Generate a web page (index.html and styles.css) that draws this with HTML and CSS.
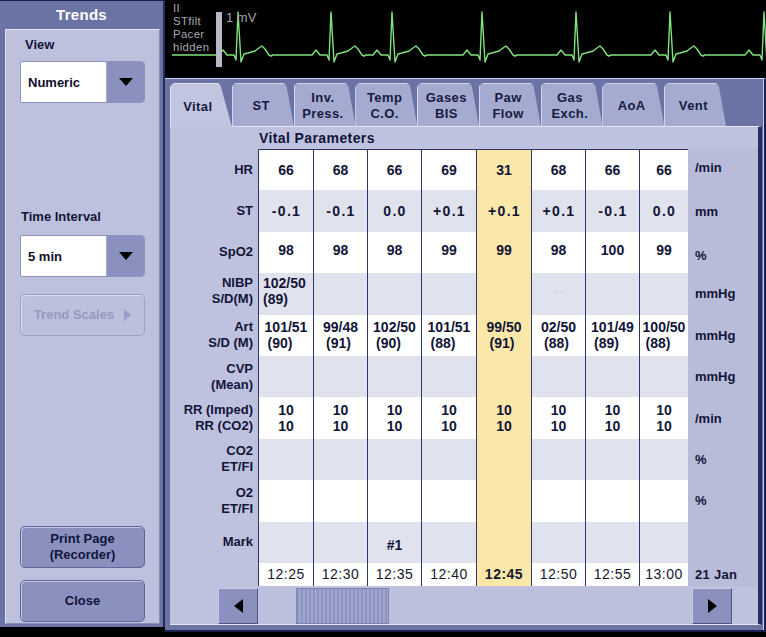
FILE: index.html
```html
<!DOCTYPE html>
<html>
<head>
<meta charset="utf-8">
<title>Trends</title>
<link rel="stylesheet" href="styles.css">
</head>
<body>
<div class="screen">
  <aside class="side">
    <div class="side-title">Trends</div>
    <div class="side-inner">
      <div class="lbl lbl-view">View</div>
      <div class="dropdown"><span class="dd-text">Numeric</span><span class="dd-btn"><span class="tri-down"></span></span></div>
      <div class="lbl lbl-time">Time Interval</div>
      <div class="dropdown dd-time"><span class="dd-text">5 min</span><span class="dd-btn"><span class="tri-down"></span></span></div>
      <div class="btn btn-disabled">Trend Scales<span class="tri-right"></span></div>
      <div class="spacer"></div>
      <div class="btn">Print Page<br>(Recorder)</div>
      <div class="btn btn-close">Close</div>
    </div>
  </aside>

  <main class="main">
    <div class="ecg">
      <svg class="ecg-svg" width="601" height="78" viewBox="165 0 601 78">
        <polyline fill="none" stroke="#7fe27f" stroke-width="1.4" stroke-linejoin="round" points="172,55 219,55 223,50 227,55 234,55 236,60 238,12 241,62 244,54 248,53 255,51 259,48 262,46 265,49 269,55 271,56 273,55 312,55 316,50 320,55 327,55 329,60 331,12 334,62 337,54 341,53 348,51 352,48 355,46 358,49 362,55 364,56 366,55 373,55 377,50 381,55 388,55 390,60 392,12 395,62 398,54 402,53 409,51 413,48 416,46 419,49 423,55 425,56 427,55 463,55 467,50 471,55 478,55 480,60 482,12 485,62 488,54 492,53 499,51 503,48 506,46 509,49 513,55 515,56 517,55 557,55 561,50 565,55 572,55 574,60 576,12 579,62 582,54 586,53 593,51 597,48 600,46 603,49 607,55 609,56 611,55 651,55 655,50 659,55 666,55 668,60 670,12 673,62 676,54 680,53 687,51 691,48 694,46 697,49 701,55 703,56 705,55 745,55 749,50 753,55 760,55 762,60 764,12 767,62"/>
        <rect x="216" y="12" width="6" height="55" fill="#b8b8c8"/>
      </svg>
      <div class="ecg-labels">
        <div class="ecg-line">II</div>
        <div class="ecg-line">STfilt</div>
        <div class="ecg-line">Pacer</div>
        <div class="ecg-line">hidden</div>
      </div>
      <div class="ecg-scale">1 mV</div>
    </div>

    <div class="panel">
      <div class="tabs">
        <div class="tab active">Vital</div>
        <div class="tab">ST</div>
        <div class="tab">Inv.<br>Press.</div>
        <div class="tab">Temp<br>C.O.</div>
        <div class="tab">Gases<br>BIS</div>
        <div class="tab">Paw<br>Flow</div>
        <div class="tab">Gas<br>Exch.</div>
        <div class="tab">AoA</div>
        <div class="tab">Vent</div>
      </div>

      <div class="content">
        <div class="content-title">Vital Parameters</div>

        <div class="table">
          <div class="row w first">
            <div class="lab">HR</div>
            <div class="c">66</div><div class="c">68</div><div class="c">66</div><div class="c">69</div>
            <div class="c hl">31</div><div class="c">68</div><div class="c">66</div><div class="c">66</div>
            <div class="u up">/min</div>
          </div>
          <div class="row g">
            <div class="lab">ST</div>
            <div class="c dec">-0.1</div><div class="c dec">-0.1</div><div class="c dec">0.0</div><div class="c dec">+0.1</div>
            <div class="c hl dec">+0.1</div><div class="c dec">+0.1</div><div class="c dec">-0.1</div><div class="c dec">0.0</div>
            <div class="u">mm</div>
          </div>
          <div class="row w">
            <div class="lab">SpO2</div>
            <div class="c up">98</div><div class="c up">98</div><div class="c up">98</div><div class="c up">99</div>
            <div class="c hl up">99</div><div class="c up">98</div><div class="c up">100</div><div class="c up">99</div>
            <div class="u down">%</div>
          </div>
          <div class="row g">
            <div class="lab up">NIBP<br>S/D(M)</div>
            <div class="c left up">102/50<br>(89)</div><div class="c"></div><div class="c"></div><div class="c"></div>
            <div class="c hl"></div><div class="c faint up">- -</div><div class="c"></div><div class="c"></div>
            <div class="u">mmHg</div>
          </div>
          <div class="row w">
            <div class="lab">Art<br>S/D (M)</div>
            <div class="c"><span class="pair">101/51<br><i>(90)</i></span></div>
            <div class="c"><span class="pair">99/48<br><i>(91)</i></span></div>
            <div class="c"><span class="pair">102/50<br><i>(90)</i></span></div>
            <div class="c"><span class="pair">101/51<br><i>(88)</i></span></div>
            <div class="c hl"><span class="pair">99/50<br><i>(91)</i></span></div>
            <div class="c"><span class="pair">02/50<br><i>(88)</i></span></div>
            <div class="c"><span class="pair">101/49<br><i>(89)</i></span></div>
            <div class="c"><span class="pair">100/50<br><i>(88)</i></span></div>
            <div class="u">mmHg</div>
          </div>
          <div class="row g">
            <div class="lab">CVP<br>(Mean)</div>
            <div class="c"></div><div class="c"></div><div class="c"></div><div class="c"></div>
            <div class="c hl"></div><div class="c"></div><div class="c"></div><div class="c"></div>
            <div class="u">mmHg</div>
          </div>
          <div class="row w">
            <div class="lab">RR (Imped)<br>RR (CO2)</div>
            <div class="c">10<br>10</div><div class="c">10<br>10</div><div class="c">10<br>10</div><div class="c">10<br>10</div>
            <div class="c hl">10<br>10</div><div class="c">10<br>10</div><div class="c">10<br>10</div><div class="c">10<br>10</div>
            <div class="u">/min</div>
          </div>
          <div class="row g">
            <div class="lab">CO2<br>ET/FI</div>
            <div class="c"></div><div class="c"></div><div class="c"></div><div class="c"></div>
            <div class="c hl"></div><div class="c"></div><div class="c"></div><div class="c"></div>
            <div class="u">%</div>
          </div>
          <div class="row w">
            <div class="lab">O2<br>ET/FI</div>
            <div class="c"></div><div class="c"></div><div class="c"></div><div class="c"></div>
            <div class="c hl"></div><div class="c"></div><div class="c"></div><div class="c"></div>
            <div class="u">%</div>
          </div>
          <div class="row g">
            <div class="lab">Mark</div>
            <div class="c"></div><div class="c"></div><div class="c down">#1</div><div class="c"></div>
            <div class="c hl"></div><div class="c"></div><div class="c"></div><div class="c"></div>
            <div class="u"></div>
          </div>
          <div class="row w time">
            <div class="lab"></div>
            <div class="c">12:25</div><div class="c">12:30</div><div class="c">12:35</div><div class="c">12:40</div>
            <div class="c hl">12:45</div><div class="c">12:50</div><div class="c">12:55</div><div class="c">13:00</div>
            <div class="u">21 Jan</div>
          </div>
        </div>

        <div class="scroll">
          <div class="sb-btn"><span class="tri-left"></span></div>
          <div class="sb-track"><div class="sb-thumb"></div></div>
          <div class="sb-btn"><span class="tri-rt"></span></div>
        </div>
      </div>
    </div>
  </main>
</div>
</body>
</html>
```

FILE: styles.css
```css
* { box-sizing: border-box; }

html, body {
  margin: 0;
  padding: 0;
}

body {
  background: #000;
  width: 766px;
  height: 637px;
  overflow: hidden;
  font-family: "Liberation Sans", Arial, sans-serif;
  color: #121438;
}

.screen {
  display: flex;
  align-items: flex-start;
  width: 766px;
  height: 637px;
}

/* ---------- left panel ---------- */
.side {
  width: 165px;
  height: 627px;
  flex: none;
  background: #6b73a5;
  border-top: 1px solid #1c2050;
  border-right: 2px solid #262b5e;
  display: flex;
  flex-direction: column;
}

.side-title {
  height: 28px;
  line-height: 28px;
  text-align: center;
  color: #fff;
  font-weight: bold;
  font-size: 15px;
  letter-spacing: 0.3px;
}

.side-inner {
  flex: 1;
  margin: 0 3px 3px 5px;
  background: #bdc1dd;
  border: 1px solid;
  border-color: #dfe2f1 #878eba #878eba #dfe2f1;
  padding: 0 14px 1px;
  display: flex;
  flex-direction: column;
}

.lbl {
  font-weight: bold;
  font-size: 13px;
  line-height: 16px;
  color: #121438;
}

.lbl-view { margin-top: 7px; padding-left: 5px; }
.lbl-time { margin-top: 106px; padding-left: 1px; }

.dropdown {
  display: flex;
  height: 42px;
  margin-top: 8px;
  border: 1px solid #8c93bf;
  border-radius: 2px 4px 4px 2px;
  overflow: hidden;
}
.dd-time { margin-top: 10px; }

.dd-text {
  flex: 1;
  background: #fff;
  display: flex;
  align-items: center;
  padding-left: 7px;
  font-weight: bold;
  font-size: 13px;
  color: #0e0f2c;
}

.dd-btn {
  width: 38px;
  background: #8a91bf;
  border-left: 1px solid #a8addb;
  display: flex;
  align-items: center;
  justify-content: center;
}

.tri-down {
  width: 0;
  height: 0;
  border-left: 7.5px solid transparent;
  border-right: 7.5px solid transparent;
  border-top: 8px solid #000;
}

.btn {
  height: 42px;
  border-radius: 5px;
  background: #8a91bf;
  border: 1px solid #5f6699;
  box-shadow: inset 1px 1px 0 #c3c7e3;
  display: flex;
  align-items: center;
  justify-content: center;
  text-align: center;
  font-weight: bold;
  font-size: 13px;
  line-height: 16px;
  color: #12143a;
}

.btn-disabled {
  margin-top: 17px;
  background: #bcc0dc;
  border-color: #9aa0c8;
  box-shadow: inset 1px 1px 0 #dcdff0;
  color: #9499c2;
}

.tri-right {
  width: 0;
  height: 0;
  margin-left: 10px;
  border-top: 6px solid transparent;
  border-bottom: 6px solid transparent;
  border-left: 7px solid #9a9fc7;
}

.spacer { flex: 1; }
.btn-close { margin-top: 12px; }

/* ---------- main ---------- */
.main {
  width: 601px;
  flex: none;
  display: flex;
  flex-direction: column;
}

.ecg {
  position: relative;
  height: 78px;
  background: #000;
}

.ecg-svg {
  position: absolute;
  left: 0;
  top: 0;
  display: block;
}

.ecg-labels {
  position: absolute;
  left: 8px;
  top: 2px;
  color: #a9a9b2;
}

.ecg-line {
  height: 13px;
  font-size: 11.3px;
  line-height: 13px;
  letter-spacing: 0.4px;
}

.ecg-scale {
  position: absolute;
  left: 61px;
  top: 10px;
  font-size: 13px;
  line-height: 16px;
  color: #a2a2aa;
}

.panel {
  height: 554px;
  background: #6b73a5;
  border-top: 1px solid #d0d4ec;
  border-right: 2px solid #1c2050;
  border-bottom: 2px solid #1c2050;
  box-shadow: inset -1px 0 0 #c8cce6;
  padding: 4px 2px 5px 5px;
  display: flex;
  flex-direction: column;
}

.tabs {
  display: flex;
  height: 43px;
  flex: none;
}

.tab {
  width: 61.75px;
  height: 43px;
  flex: none;
  clip-path: path('M0 43 L0 6 Q0 0 6 0 L50 0 Q54 0 55 4 L62 43 Z');
  background: #a4aad0;
  box-shadow: inset 1px 1px 0 #d3d6ed;
  display: flex;
  align-items: center;
  justify-content: center;
  text-align: center;
  padding: 3px 3px 0 0;
  font-weight: bold;
  font-size: 13px;
  line-height: 16px;
  letter-spacing: 0.4px;
  color: #181a42;
}

.tab.active {
  height: 44px;
  margin-bottom: -1px;
  position: relative;
  z-index: 1;
  clip-path: path('M0 44 L0 6 Q0 0 6 0 L46 0 Q50 0 51 4 L62 44 Z');
  background: #c1c5e0;
  box-shadow: inset 1px 1px 0 #e3e5f3;
  padding-right: 6px;
}

.content {
  width: 592px;
  height: 499px;
  background: #bec2de;
  border-top: 1px solid #e3e5f3;
  border-bottom: 1px solid #e3e5f3;
  border-right: 4px solid #262c66;
  display: flex;
  flex-direction: column;
}

.content-title {
  height: 22px;
  line-height: 22px;
  padding-left: 89px;
  font-weight: bold;
  font-size: 14px;
  letter-spacing: 0.4px;
  color: #121438;
}

/* ---------- table ---------- */
.row {
  display: grid;
  grid-template-columns: 88px 55px 54px 54px 55px 55px 54px 54px 49px 70px;
  height: 41.4px;
}

.lab {
  display: flex;
  align-items: center;
  justify-content: flex-end;
  text-align: right;
  padding-right: 5px;
  font-weight: bold;
  font-size: 13px;
  line-height: 16px;
  color: #121438;
}

.c {
  border-left: 1px solid #2e3566;
  display: flex;
  align-items: center;
  justify-content: center;
  text-align: center;
  font-weight: bold;
  font-size: 14px;
  line-height: 16px;
  color: #121438;
}

.row.w .c { background: #fff; }
.row.g .c { background: #e0e3ee; }
.row .c.hl { background: #fbe8a8; }
.row.first .c { border-top: 1px solid #2e3566; }

.u {
  display: flex;
  align-items: center;
  padding-left: 7px;
  background: #b8bcd9;
  font-weight: bold;
  font-size: 13px;
  color: #121438;
}

.dec { letter-spacing: 1.3px; padding-left: 1px; }
.up { padding-bottom: 5px; }
.down { padding-top: 6px; }
.left { justify-content: flex-start; text-align: left; padding-left: 4px; }
.faint { color: #c9ccd8; font-weight: normal; font-size: 11px; }

.pair { display: inline-block; text-align: left; }
.pair i { font-style: normal; padding-left: 3px; }

.row.time { height: 23px; }
.row.time .c {
  font-weight: normal;
  font-size: 14px;
  letter-spacing: 0.5px;
  color: #16182e;
}
.row.time .c.hl { font-weight: bold; }
.row.time .u { letter-spacing: 0.3px; }

/* ---------- scrollbar ---------- */
.scroll {
  display: flex;
  height: 36px;
  margin: 2px 26px 0 48px;
}

.sb-btn {
  width: 40px;
  flex: none;
  background: #8a91bf;
  border: 1px solid;
  border-color: #c8cce6 #4e5588 #4e5588 #c8cce6;
  display: flex;
  align-items: center;
  justify-content: center;
}

.sb-track {
  flex: 1;
  display: flex;
  background: #bcc0dc;
}

.sb-thumb {
  width: 93px;
  margin-left: 38px;
  background: repeating-linear-gradient(90deg, #8d94c2 0 2px, #a0a6ce 2px 4px);
  border: 1px solid #7d84b6;
}

.tri-left {
  width: 0;
  height: 0;
  border-top: 7px solid transparent;
  border-bottom: 7px solid transparent;
  border-right: 9px solid #000;
}

.tri-rt {
  width: 0;
  height: 0;
  border-top: 7px solid transparent;
  border-bottom: 7px solid transparent;
  border-left: 9px solid #000;
}
```
